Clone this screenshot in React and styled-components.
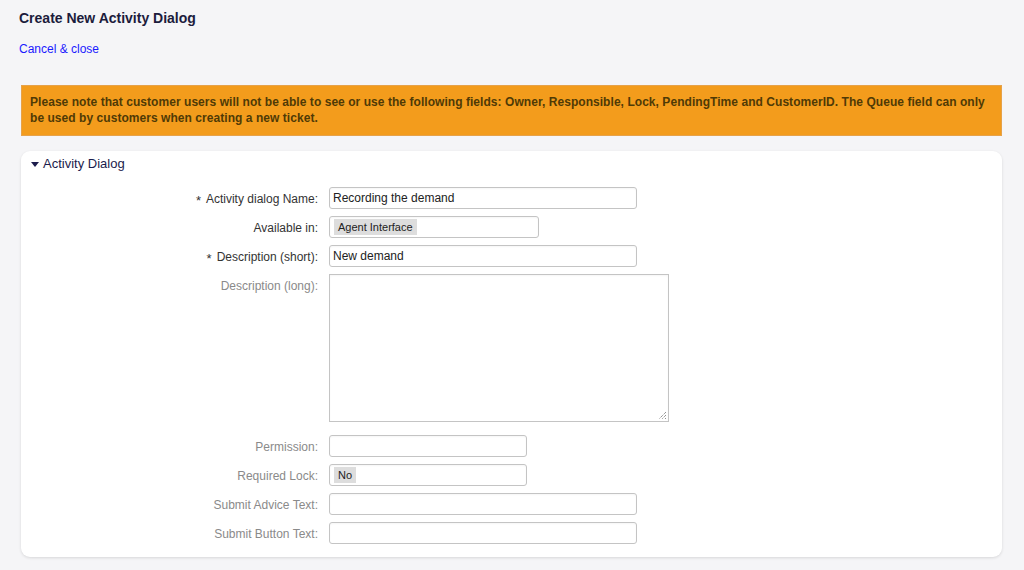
import styled, { createGlobalStyle } from 'styled-components';

const GlobalStyle = createGlobalStyle`
    html, body {
        margin: 0;
        padding: 0;
        background: #f5f5f7;
        font-family: "Liberation Sans", Arial, sans-serif;
        font-size: 12px;
        color: #333;
    }
`;

const Page = styled.div`
    width: 1024px;
    height: 570px;
    overflow: hidden;
    box-sizing: border-box;
`;

const Header = styled.div`
    padding: 10px 19px 0;
    height: 68px;
    box-sizing: border-box;
`;

const Title = styled.h1`
    margin: 0;
    font-size: 14px;
    font-weight: bold;
    color: #1c1c3c;
    line-height: 16px;
`;

const CancelLink = styled.a`
    display: inline-block;
    margin-top: 16px;
    color: #1a1aff;
    text-decoration: none;
    font-size: 12px;
    line-height: 14px;
`;

const Content = styled.div`
    padding: 17px 22px 0 21px;
    display: flex;
    flex-direction: column;
    gap: 15px;
`;

const Notice = styled.div`
    background: #f39c1c;
    border: 1px solid #e6a24a;
    color: #4f3a06;
    font-weight: bold;
    font-size: 12px;
    line-height: 16px;
    letter-spacing: 0.05px;
    padding: 8px 8px 9px;
`;

const Panel = styled.div`
    background: #fff;
    border-radius: 9px;
    box-shadow: 0 1px 3px rgba(0, 0, 0, 0.12);
    padding: 5px 10px 13px;
    height: 406px;
    box-sizing: border-box;
`;

const PanelHeader = styled.div`
    display: flex;
    align-items: center;
    gap: 4px;
    color: #1c1c4c;
    font-size: 13px;
    line-height: 16px;
`;

const Triangle = styled.span`
    width: 0;
    height: 0;
    border-left: 4.5px solid transparent;
    border-right: 4.5px solid transparent;
    border-top: 5px solid #1c1c4c;
    margin-top: 1px;
`;

const Form = styled.div`
    display: flex;
    flex-direction: column;
    gap: 7px;
    margin-top: 15px;
`;

const Row = styled.div`
    display: flex;
    align-items: flex-start;
    margin-top: ${(p) => p.gapTop || 0}px;
`;

const Label = styled.label`
    width: 287px;
    height: 22px;
    flex: none;
    text-align: right;
    padding-right: 11px;
    line-height: 24px;
    color: ${(p) => (p.required ? '#333' : '#8a8a8a')};
`;

const Star = styled.span`
    color: #333;
    font-size: 13px;
    position: relative;
    top: 2px;
    margin-right: 5px;
`;

const Field = styled.div`
    width: ${(p) => p.width}px;
    height: ${(p) => p.height || 22}px;
    box-sizing: border-box;
    border: 1px solid #c4c4c4;
    border-radius: ${(p) => (p.textarea ? '0' : '3px')};
    background: #fff;
    box-shadow: inset 0 1px 2px rgba(0, 0, 0, 0.04);
    padding: 0 3px;
    display: flex;
    align-items: ${(p) => (p.textarea ? 'flex-start' : 'center')};
    color: #222;
    font-size: 12px;
    position: relative;
`;

const Tag = styled.span`
    background: #ddd;
    color: #222;
    font-size: 11px;
    line-height: 16px;
    padding: 0 4px;
    margin-left: 1px;
`;

const Grip = styled.svg`
    position: absolute;
    right: 1px;
    bottom: 1px;
`;

const fields = [
    { label: 'Activity dialog Name:', required: true, width: 308, value: 'Recording the demand' },
    { label: 'Available in:', required: true, width: 210, tag: 'Agent Interface', noStar: true },
    { label: 'Description (short):', required: true, width: 308, value: 'New demand' },
    { label: 'Description (long):', width: 340, height: 148, textarea: true },
    { label: 'Permission:', width: 198, gapTop: 6 },
    { label: 'Required Lock:', width: 198, tag: 'No' },
    { label: 'Submit Advice Text:', width: 308 },
    { label: 'Submit Button Text:', width: 308 },
];

const App = () => {
    return (
        <Page>
            <GlobalStyle />
            <Header>
                <Title>Create New Activity Dialog</Title>
                <CancelLink href="#">Cancel &amp; close</CancelLink>
            </Header>
            <Content>
                <Notice>
                    Please note that customer users will not be able to see or use the following fields: Owner, Responsible, Lock, PendingTime and CustomerID. The Queue field can only be used by customers when creating a new ticket.
                </Notice>
                <Panel>
                    <PanelHeader>
                        <Triangle />
                        Activity Dialog
                    </PanelHeader>
                    <Form>
                        {fields.map((f) => (
                            <Row key={f.label} gapTop={f.gapTop}>
                                <Label required={f.required}>
                                    {f.required && !f.noStar && <Star>*</Star>}
                                    {f.label}
                                </Label>
                                <Field width={f.width} height={f.height} textarea={f.textarea}>
                                    {f.value}
                                    {f.tag && <Tag>{f.tag}</Tag>}
                                    {f.textarea && (
                                        <Grip width="10" height="10" viewBox="0 0 10 10">
                                            <path d="M9 2 L2 9 M9 5 L5 9 M9 8 L8 9" stroke="#666" strokeWidth="1" strokeDasharray="1 1" />
                                        </Grip>
                                    )}
                                </Field>
                            </Row>
                        ))}
                    </Form>
                </Panel>
            </Content>
        </Page>
    );
};

export default App;
